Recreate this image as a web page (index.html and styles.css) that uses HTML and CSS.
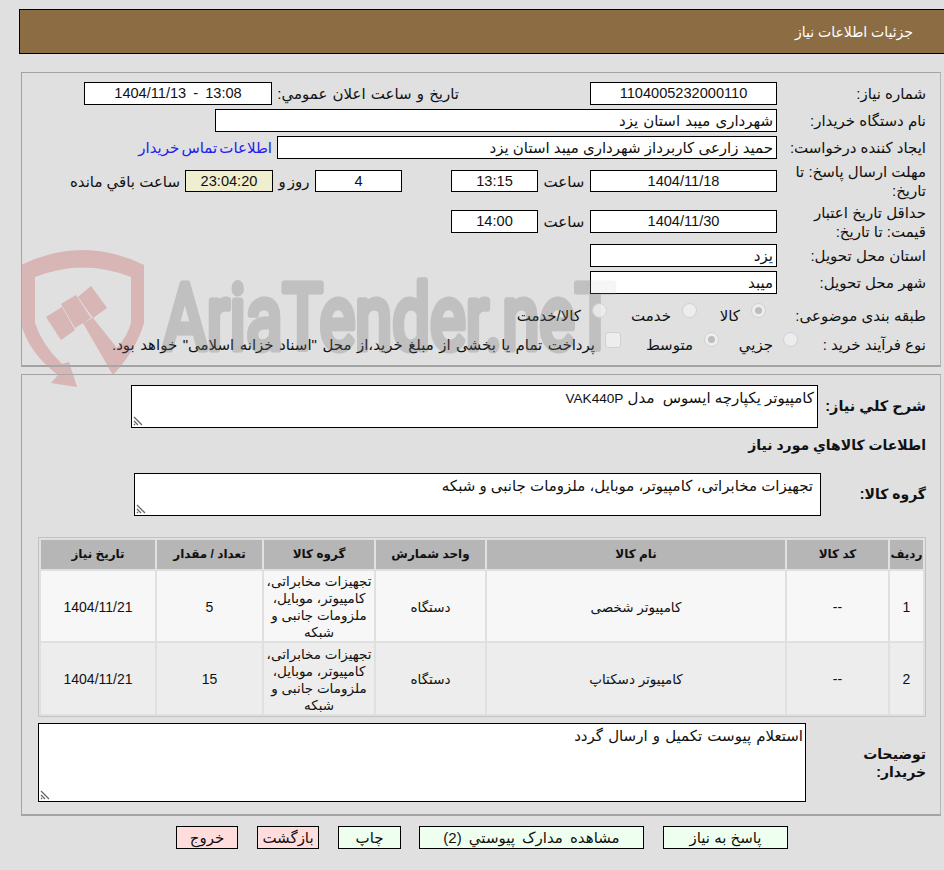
FILE: index.html
```html
<!DOCTYPE html>
<html lang="fa" dir="rtl">
<head>
<meta charset="utf-8">
<title>جزئیات اطلاعات نیاز</title>
<link rel="stylesheet" href="styles.css">
</head>
<body>
<svg class="watermark" width="640" height="150" viewBox="0 0 640 150" aria-hidden="true">
  <g id="wm">
    <path class="wm-red" d="M1 15 Q63 -15 124 15 L124 73 Q116 100 93 125 L86 113 L97 98 Q108 85 111 73 L111 27 Q63 8 15 27 L15 73 Q22 95 42 114 L49 112 L57 137 L31 133 L38 125 Q8 102 1 73 Z"/>
    <path class="wm-red" d="M26 67 L42 57 L55 80 L41 90 Z M41 54 L56 45 L71 68 L55 78 Z M58 47 L71 36 L87 58 L73 68 Z M63 73 L73 68 L97 98 L93 125 Z"/>
    <text class="wm-text" x="143" y="99" textLength="452" lengthAdjust="spacingAndGlyphs">AriaTender.neT</text>
  </g>
</svg>
<svg class="watermark veil" width="640" height="150" viewBox="0 0 640 150" aria-hidden="true"><use href="#wm"/></svg>

<header class="title-bar">جزئیات اطلاعات نیاز</header>

<section class="panel info">
  <div class="row">
    <label class="lbl">شماره نیاز:</label>
    <div class="box w-main c">1104005232000110</div>
    <label class="lbl-pub">تاریخ و ساعت اعلان عمومي:</label>
    <div class="box w-pub c ltr">1404/11/13 - 13:08</div>
  </div>
  <div class="row">
    <label class="lbl">نام دستگاه خریدار:</label>
    <div class="box w-buyer">شهرداری میبد استان یزد</div>
  </div>
  <div class="row">
    <label class="lbl">ایجاد کننده درخواست:</label>
    <div class="box w-creator">حمید زارعی کاربرداز شهرداری میبد استان یزد</div>
    <a class="contact" href="#">اطلاعات تماس خریدار</a>
  </div>
  <div class="row r-deadline">
    <label class="lbl">مهلت ارسال پاسخ: تا تاریخ:</label>
    <div class="box w-main c">1404/11/18</div>
    <span class="word">ساعت</span>
    <div class="box w-time c">13:15</div>
    <div class="box w-days c">4</div>
    <span class="word-day">روز و</span>
    <div class="box w-remain c">23:04:20</div>
    <span class="word-left">ساعت باقي مانده</span>
  </div>
  <div class="row r-validity">
    <label class="lbl">حداقل تاریخ اعتبار قیمت: تا تاریخ:</label>
    <div class="box w-main c">1404/11/30</div>
    <span class="word">ساعت</span>
    <div class="box w-time c">14:00</div>
  </div>
  <div class="row">
    <label class="lbl">استان محل تحویل:</label>
    <div class="box w-main">یزد</div>
  </div>
  <div class="row">
    <label class="lbl">شهر محل تحویل:</label>
    <div class="box w-main">میبد</div>
  </div>
  <div class="row opts r-subject">
    <label class="lbl">طبقه بندی موضوعی:</label>
    <span class="radio on s1"></span><span class="opt o1">کالا</span>
    <span class="radio"></span><span class="opt o2">خدمت</span>
    <span class="radio"></span><span class="opt">کالا/خدمت</span>
  </div>
  <div class="row opts r-process">
    <label class="lbl">نوع فرآیند خرید :</label>
    <span class="radio"></span><span class="opt o3">جزيي</span>
    <span class="radio on"></span><span class="opt o4">متوسط</span>
    <span class="check"></span><span class="opt o5">پرداخت تمام یا بخشی از مبلغ خرید،از محل "اسناد خزانه اسلامی" خواهد بود.</span>
  </div>
</section>

<section class="panel detail">
  <div class="row r-desc">
    <label class="lbl-b l-desc">شرح کلي نیاز:</label>
    <div class="area a-desc">کامپیوتر یکپارچه ایسوس  مدل <span class="lat">VAK440P</span><svg class="grip" width="10" height="10" viewBox="0 0 10 10"><path d="M1 1 L9 9 M1 5 L5 9 M1 8 L2 9"/></svg></div>
  </div>
  <h2 class="sub">اطلاعات کالاهاي مورد نیاز</h2>
  <div class="row r-group">
    <label class="lbl-b l-group">گروه کالا:</label>
    <div class="area a-group">تجهیزات مخابراتی، کامپیوتر، موبایل، ملزومات جانبی و شبکه<svg class="grip" width="10" height="10" viewBox="0 0 10 10"><path d="M1 1 L9 9 M1 5 L5 9 M1 8 L2 9"/></svg></div>
  </div>
  <table class="items">
    <colgroup>
      <col class="k1"><col class="k2"><col class="k3"><col class="k4"><col class="k5"><col class="k6"><col class="k7">
    </colgroup>
    <thead>
      <tr><th>ردیف</th><th>کد کالا</th><th>نام کالا</th><th>واحد شمارش</th><th>گروه کالا</th><th>تعداد / مقدار</th><th>تاریخ نیاز</th></tr>
    </thead>
    <tbody>
      <tr><td class="num">1</td><td class="num">--</td><td>کامپیوتر شخصی</td><td>دستگاه</td><td>تجهیزات مخابراتی، کامپیوتر، موبایل، ملزومات جانبی و شبکه</td><td class="num">5</td><td class="num">1404/11/21</td></tr>
      <tr><td class="num">2</td><td class="num">--</td><td>کامپیوتر دسکتاپ</td><td>دستگاه</td><td>تجهیزات مخابراتی، کامپیوتر، موبایل، ملزومات جانبی و شبکه</td><td class="num">15</td><td class="num">1404/11/21</td></tr>
    </tbody>
  </table>
  <div class="row r-note">
    <label class="lbl-b l-note">توضیحات خریدار:</label>
    <div class="area a-note">استعلام پیوست تکمیل و ارسال گردد<svg class="grip" width="10" height="10" viewBox="0 0 10 10"><path d="M1 1 L9 9 M1 5 L5 9 M1 8 L2 9"/></svg></div>
  </div>
</section>

<nav class="actions">
  <button class="btn green b-reply">پاسخ به نیاز</button>
  <button class="btn green b-docs">مشاهده مدارک پیوستي (2)</button>
  <button class="btn green b-print">چاپ</button>
  <button class="btn red b-back">بازگشت</button>
  <button class="btn red b-exit">خروج</button>
</nav>
</body>
</html>
```

FILE: styles.css
```css
* { box-sizing: border-box; }
html, body { margin: 0; padding: 0; }
body {
  width: 944px;
  height: 870px;
  overflow: hidden;
  position: relative;
  background: #e0e0e0;
  color: #111;
  font: 15px/17px "Liberation Sans", "DejaVu Sans", sans-serif;
  padding-top: 9px;
}
.watermark { position: absolute; left: 20px; top: 250px; z-index: 0; direction: ltr; overflow: visible; }
.veil { z-index: 2; opacity: 0.15; pointer-events: none; }
.wm-red { fill: #d9b6b6; }
.wm-text { font: 400 90px "Roboto", sans-serif; fill: #c0c0c0; stroke: #c0c0c0; stroke-width: 7px; stroke-linejoin: round; }

.title-bar {
  position: relative;
  z-index: 1;
  margin-right: -1px;
  margin-left: 19px;
  height: 45px;
  border: 1px solid #000;
  background: #8c6c42;
  color: #fff;
  padding-right: 31px;
  font-size: 14px;
  line-height: 44px;
}
.panel {
  position: relative;
  z-index: 1;
  margin-left: 21px;
  margin-right: 3px;
  border: 1px solid #a3a3a3;
  border-right-color: #b5b5b5;
  border-bottom-width: 2px;
}
.info { margin-top: 18px; height: 295px; padding-top: 9px; }
.detail { margin-top: 7px; height: 442px; padding-top: 10px; }

.row { display: flex; align-items: center; height: 23px; margin-bottom: 4px; }
.lbl { width: 149px; padding-left: 8px; margin-right: 14px; flex: none; line-height: 19px; }
.box {
  flex: none;
  height: 23px;
  background: #fff;
  border: 1px solid #000;
  line-height: 21px;
  padding: 0 3px;
  white-space: nowrap;
  overflow: hidden;
}
.c { text-align: center; font-size: 14.6px; }
.ltr { direction: ltr; word-spacing: 3px; }
.w-main { width: 187px; }
.w-pub { width: 188px; }
.w-buyer { width: 562px; word-spacing: 1px; }
.w-creator { width: 500px; }
.w-time { width: 87px; }
.w-days { width: 87px; margin-right: 49px; }
.w-remain { width: 88px; background: #efefd0; }
.lbl-pub { margin-right: 131px; width: 187px; flex: none; white-space: nowrap; word-spacing: 1px; }
.contact { margin-right: 5px; color: #2222ee; text-decoration: none; white-space: nowrap; word-spacing: -2px; }
.word { width: 52px; text-align: center; flex: none; }
.word-day { width: 42px; flex: none; text-align: center; word-spacing: -2px; }
.word-left { margin-right: 5px; white-space: nowrap; }
.r-deadline { margin-top: 11px; margin-bottom: 18px; height: 22px; }
.r-deadline .box { height: 22px; }
.r-validity { margin-bottom: 11px; }
.r-subject { margin-top: 10px; margin-bottom: 6px; }
.r-process { margin-bottom: 0; }
.r-process .lbl { width: 128px; }
.opts { white-space: nowrap; }
.radio, .check {
  flex: none;
  width: 15px;
  height: 15px;
  border-radius: 50%;
  background: #ededed;
  border: 1px solid #d0d0d0;
  margin-top: -10px;
  position: relative;
}
.radio.on::after {
  content: "";
  position: absolute;
  inset: 3px;
  border-radius: 50%;
  background: #bdbdbd;
}
.s1 { margin-right: 11px; }
.check { width: 16px; height: 16px; border-radius: 3px; }
.opt { margin-right: 11px; flex: none; }
.o1 { width: 43px; }
.o2 { width: 64px; }
.o3 { width: 54px; margin-right: 10px; }
.o4 { width: 72px; margin-right: 11px; }
.o5 { margin-right: 10px; word-spacing: 1.3px; }

.lbl-b { font-size: 14px; font-weight: 700; flex: none; }
.l-desc { width: 108px; margin-right: 14px; font-size: 14.5px; }
.l-group { width: 105px; margin-right: 14px; }
.l-note { width: 120px; padding-left: 35px; margin-right: 14px; line-height: 18px; }
.area {
  position: relative;
  flex: none;
  background: #fff;
  border: 1px solid #000;
  padding: 3px;
  white-space: pre-wrap;
}
.lat { font-size: 13.6px; }
.grip { position: absolute; left: 1px; bottom: 1px; }
.grip path { stroke: #666; stroke-width: 1.3; fill: none; }
.r-desc { height: 43px; margin-bottom: 0; }
.a-desc { width: 687px; height: 43px; padding: 3px 3px 0; }
.sub { font: 700 14px/17px "Liberation Sans", "DejaVu Sans", sans-serif; margin: 7px 14px 18px 0; height: 20px; padding-top: 2px; }
.r-group { height: 43px; margin-bottom: 21px; }
.a-group { width: 687px; height: 43px; padding: 3px 7px 0; }

.items {
  width: 886px;
  margin: 0 14px 0 0;
  border-collapse: separate;
  border-spacing: 2px;
  border: 1px solid #c2c2c2;
  table-layout: fixed;
  background: #e0e0e0;
}
.k1 { width: 33px; } .k2 { width: 101px; } .k3 { width: 298px; } .k4 { width: 109px; }
.k5 { width: 110px; } .k6 { width: 105px; } .k7 { width: 114px; }
.items th { background: #b6b6b6; height: 29px; font-size: 12px; font-weight: 700; padding: 0; }
.items td { text-align: center; padding: 2px 0 0; height: 70px; line-height: 17px; font-size: 13.5px; }
.items td.num { font-size: 14px; }
.items tbody tr:nth-child(1) td { background: #f7f7f7; }
.items tbody tr:nth-child(2) td { background: #ededed; height: 71px; }

.r-note { height: 79px; margin-top: 6px; margin-bottom: 0; }
.a-note { width: 768px; height: 79px; padding: 3px 2px 0; word-spacing: 1px; }

.actions {
  position: relative;
  z-index: 1;
  display: flex;
  margin-top: 10px;
  padding-right: 156px;
}
.btn {
  flex: none;
  height: 23px;
  padding: 0;
  border: 1px solid #000;
  color: #111;
  font: 15px/19px "Liberation Sans", "DejaVu Sans", sans-serif;
}
.green { background: #efffef; }
.red { background: #ffdddd; }
.b-reply { width: 125px; margin-left: 19px; }
.b-docs { width: 225px; margin-left: 18px; word-spacing: 3px; }
.b-print { width: 63px; margin-left: 19px; }
.b-back { width: 62px; margin-left: 19px; }
.b-exit { width: 62px; }
```
